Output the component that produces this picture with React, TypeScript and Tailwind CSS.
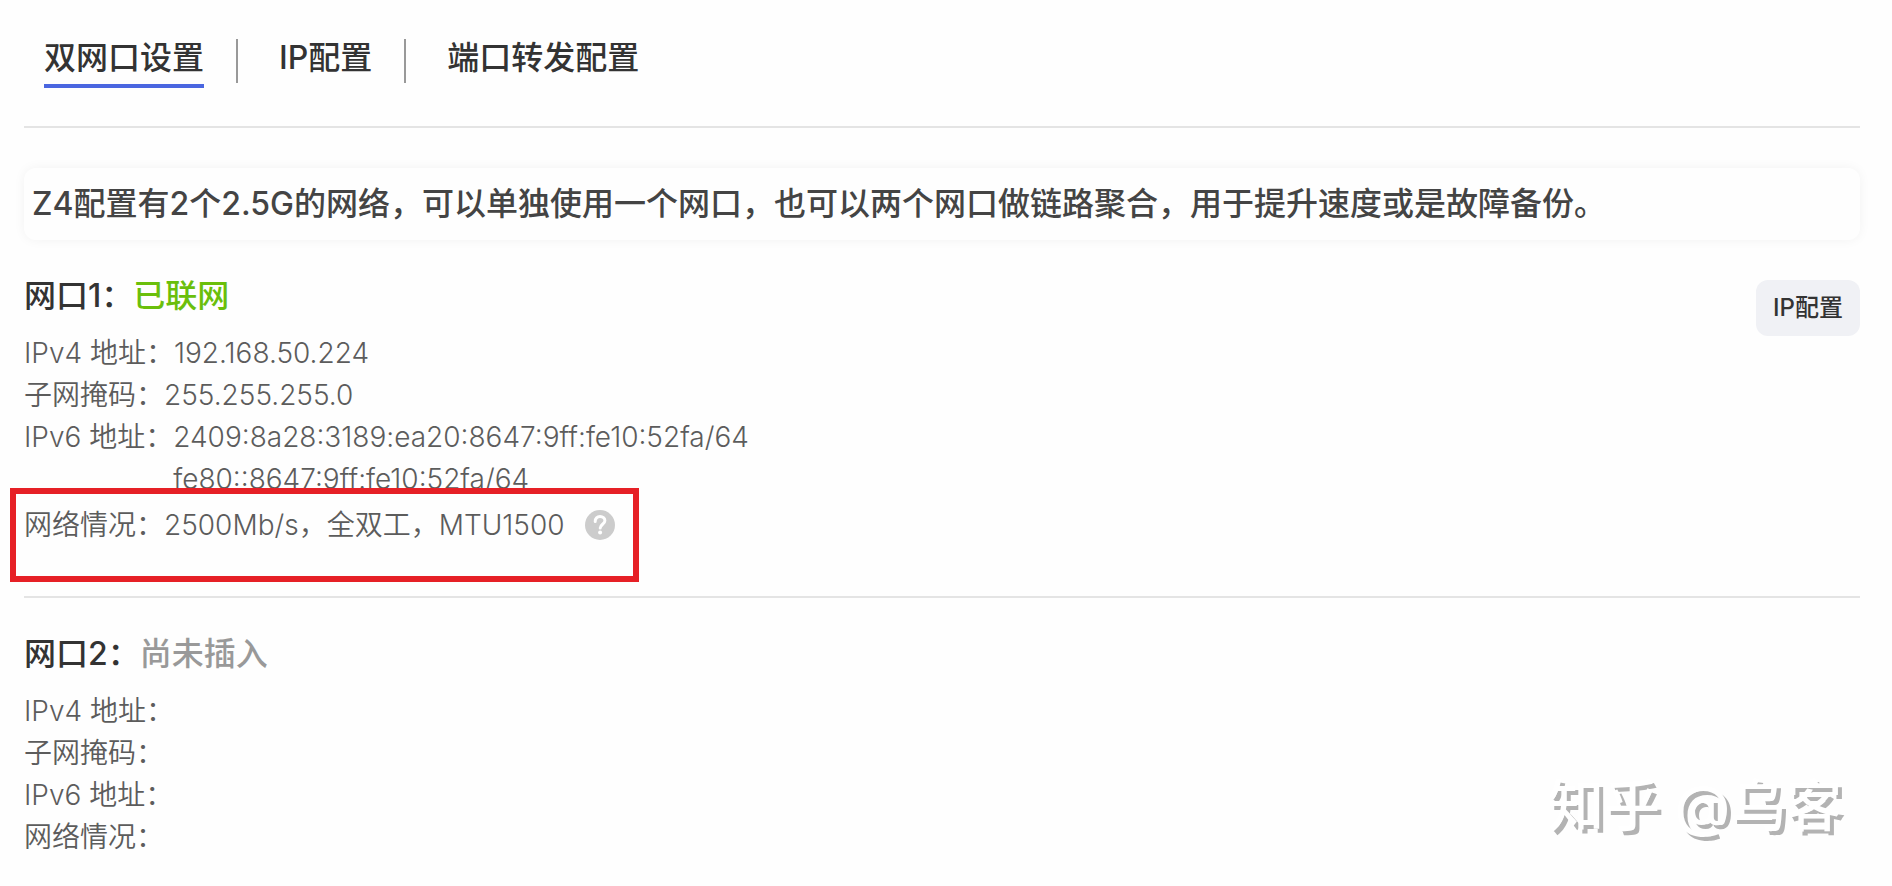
import { clsx } from "clsx";
import type { ReactNode } from "react";

const tabs = ["双网口设置", "IP配置", "端口转发配置"];

function Tabs() {
	return (
		<nav className="flex items-center border-b-2 border-[#e4e4e4] px-5 pt-[34px] pb-[38px]">
			{tabs.map((tab, i) => (
				<div key={tab} className="flex items-center">
					{i > 0 && <span className="mr-[41px] ml-8 h-11 w-0.5 bg-[#999]" />}
					<button
						type="button"
						className={clsx(
							"border-b-4 pb-0.5 text-[32px] leading-12 font-medium text-[#333]",
							i === 0 ? "border-[#4a66e0]" : "border-transparent"
						)}
					>
						{tab}
					</button>
				</div>
			))}
		</nav>
	);
}

function HelpIcon() {
	return (
		<svg viewBox="0 0 30 30" className="size-[30px]" aria-hidden="true">
			<circle cx="15" cy="15" r="15" fill="#ccc" />
			<path
				d="M10.2 11.4C10.2 8.4 12.2 6.6 15 6.6s4.9 1.7 4.9 4.2c0 3.2-4.7 3.7-4.7 7.2"
				fill="none"
				stroke="#fff"
				strokeWidth="3"
				strokeLinecap="round"
			/>
			<circle cx="15.1" cy="22.6" r="2" fill="#fff" />
		</svg>
	);
}

function Row({ label, children }: { label: string; children?: ReactNode }) {
	return (
		<div className="flex">
			<dt>{label}：</dt>
			<dd>{children}</dd>
		</div>
	);
}

function PortTitle({
	name,
	status,
	online = false,
}: {
	name: string;
	status: string;
	online?: boolean;
}) {
	return (
		<h2 className="text-[32px] leading-12 font-medium text-[#333]">
			{name}：
			<span className={online ? "text-[#6abf0b]" : "text-[#999]"}>
				{status}
			</span>
		</h2>
	);
}

export default function App() {
	return (
		<main className="relative min-h-screen bg-[#fefefe] pr-8 pl-6 font-[Inter,'Noto_Sans_CJK_SC',sans-serif]">
			<Tabs />

			<p className="mt-10 rounded-xl px-2 py-3 text-[32px] leading-12 font-medium text-[#444] shadow-[0_0_12px_rgba(0,0,0,0.05)]">
				Z4配置有2个2.5G的网络，可以单独使用一个网口，也可以两个网口做链路聚合，用于提升速度或是故障备份。
			</p>

			<section className="flex items-start justify-between border-b-2 border-[#e4e4e4] pt-8 pb-[50px]">
				<div>
					<PortTitle name="网口1" status="已联网" online />
					<dl className="mt-3 text-[28px] leading-[42px] font-[350] text-[#5c5c5c]">
						<Row label="IPv4 地址">192.168.50.224</Row>
						<Row label="子网掩码">255.255.255.0</Row>
						<Row label="IPv6 地址">
							2409:8a28:3189:ea20:8647:9ff:fe10:52fa/64
							<br />
							fe80::8647:9ff:fe10:52fa/64
						</Row>
						<div className="relative mt-1 w-fit">
							<Row label="网络情况">
								<span className="flex items-center gap-5">
									2500Mb/s，全双工，MTU1500
									<button type="button" aria-label="帮助">
										<HelpIcon />
									</button>
								</span>
							</Row>
							{/* highlight frame */}
							<div className="absolute -top-4 -right-6 -bottom-9 -left-3.5 border-6 border-[#e62026]" />
						</div>
					</dl>
				</div>
				<button
					type="button"
					className="mt-2 rounded-xl bg-[#f0f1f5] px-[17px] py-3 text-2xl leading-8 font-medium text-[#333]"
				>
					IP配置
				</button>
			</section>

			<section className="pt-8">
				<PortTitle name="网口2" status="尚未插入" />
				<dl className="mt-3 text-[28px] leading-[42px] font-[350] text-[#5c5c5c]">
					<Row label="IPv4 地址" />
					<Row label="子网掩码" />
					<Row label="IPv6 地址" />
					<Row label="网络情况" />
				</dl>
			</section>

			<div className="absolute right-[50px] bottom-10 text-[56px] leading-20 font-medium text-white [text-shadow:4px_4px_0_#b3b3b3]">
				知乎 @乌客
			</div>
		</main>
	);
}
